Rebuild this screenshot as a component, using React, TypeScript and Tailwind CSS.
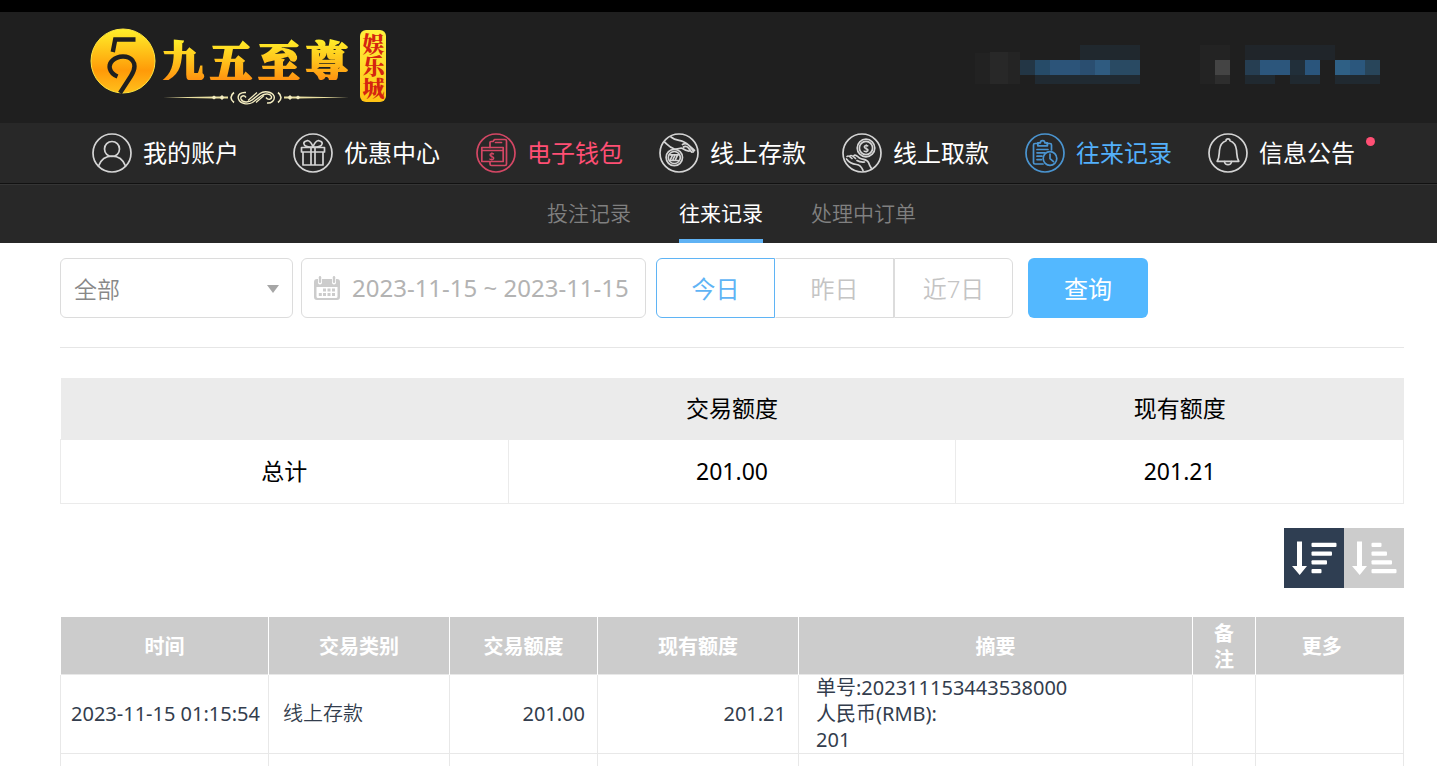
import React, { useState } from 'react';
import clsx from 'clsx';

type NavItem = {
  label: string;
  icon: React.ReactNode;
  color?: string;
  hasDot?: boolean;
};

type RecordRow = {
  time: string;
  type: string;
  amount: string;
  balance: string;
  summary: string[];
};

const IconFrame: React.FC<{ children: React.ReactNode }> = ({ children }) => (
  <svg
    className="size-10 shrink-0 opacity-80"
    viewBox="0 0 40 40"
    fill="none"
    stroke="currentColor"
    strokeWidth="1.7"
    strokeLinecap="round"
    strokeLinejoin="round"
    aria-hidden="true"
  >
    <circle cx="20" cy="20" r="19" />
    {children}
  </svg>
);

const UserIcon = () => (
  <IconFrame>
    <circle cx="20" cy="16" r="7.5" />
    <path d="M6.5 33 C9 26.5 13.5 23.2 20 23.2 S31 26.5 33.5 33" />
  </IconFrame>
);

const GiftIcon = () => (
  <IconFrame>
    <path d="M8.5 14.5h23v4.5h-23z M10 19v13h20V19 M18 14.5V32 M22 14.5V32" />
    <path d="M18.5 14 C15 14.5 11 13 10.8 10.5 C10.6 8 13.5 8.2 14.5 7.5 C17 8 19 11 20 14 C21 11 23 8 25.5 7.5 C26.5 8.2 29.4 8 29.2 10.5 C29 13 25 14.5 21.5 14" />
  </IconFrame>
);

const WalletIcon = () => (
  <IconFrame>
    <path d="M14 14.5V9.5q0-1 1-1h2l1.5-2h10.5q1.5 0 1.5 1.5v23q0 1.5-1.5 1.5H15.5q-1.5 0-1.5-1.5V29" />
    <path d="M19.5 9.5h6 M5.8 14.5h21.4v14H5.8z M5.8 17.5h21.4" />
    <text x="15.8" y="26.8" textAnchor="middle" fontSize="10" fontWeight="700" stroke="none" fill="currentColor">
      $
    </text>
  </IconFrame>
);

const DepositIcon = () => (
  <IconFrame>
    <circle cx="15.3" cy="24.5" r="8.2" />
    <circle cx="15.3" cy="24.5" r="6" />
    <path d="M11.5 26.5l1.8-3.8 M14 26.5l1.8-3.8 M16.5 26.5l1.8-3.8 M11 21.8h8.5 M11 27.5h8.5" />
    <path d="M5.5 9 C8 11 10.5 14.5 15 15.8 C19 16.8 21.5 14.2 23.5 15.5 C26.5 17.5 28 18.5 30.5 18 M12 4 C16 7.5 20 7 24 8.5 C29 10.5 31.5 14 35.5 17.5 M23.5 11.5 C27 9.5 30 12 32 15 C33.5 17 35 18.5 34 19 M24.5 14 C27 12 29.5 14.5 31.5 17.5 M29 14.5l3.5 4.5" />
  </IconFrame>
);

const WithdrawIcon = () => (
  <IconFrame>
    <circle cx="24" cy="15" r="8.8" />
    <circle cx="24" cy="15" r="6.6" />
    <text x="24" y="18.6" textAnchor="middle" fontSize="10" fontWeight="700" stroke="none" fill="currentColor">
      $
    </text>
    <path d="M5 23.5 C6.5 22 8 23.5 10 25.5 M8.3 22.8 C10 21.5 11.5 23.5 13.5 25.5 M12 22.5 C13.5 21 15 23 17.5 25 C21 27 25 26 26.5 29.5 C27.5 32.5 28.5 34 29.5 35.5 M4.5 26 C7 29.5 10 31 14.5 31.5 C19 32 20 35 21 37.5 M15 27.5 C18 29.5 20.5 29 22.5 29" />
  </IconFrame>
);

const RecordsIcon = () => (
  <IconFrame>
    <path d="M13.5 10.5h-3.5q-1.5 0-1.5 1.5v17.5q0 1.5 1.5 1.5H18 M21.5 10.5H25q1.5 0 1.5 1.5v5" />
    <path d="M12.8 12.8v-3h2.6a2.2 2.2 0 0 1 4.4 0h2.6v3z" />
    <path d="M12 16.5h11 M12 19.8h8 M12 23.2h5 M12 26.6h4.5" />
    <circle cx="25" cy="25.5" r="6.8" />
    <path d="M25 21v4.7l3.5 3" />
  </IconFrame>
);

const BellIcon = () => (
  <IconFrame>
    <path d="M18 7.8 a2 2 0 0 1 4 0 C26.5 9.5 28 12.5 28.5 17 C29 21.5 28.5 24.5 30.8 28.3 H9.2 C11.5 24.5 11 21.5 11.5 17 C12 12.5 13.5 9.5 18 7.8z" />
    <path d="M16.5 28.5 a3.5 3.2 0 0 0 7 0" />
  </IconFrame>
);

const CalendarIcon = () => (
  <svg className="h-6 w-[26px] shrink-0 fill-[#ccc]" viewBox="0 0 26 24" aria-hidden="true">
    <path d="M3 3h1v3.5a2 2 0 0 0 4 0V3h10v3.5a2 2 0 0 0 4 0V3h1q3 0 3 3v5H0V6q0-3 3-3z" />
    <rect x="4.8" y="0" width="2.4" height="7" rx="1.2" />
    <rect x="18.8" y="0" width="2.4" height="7" rx="1.2" />
    <path fillRule="evenodd" d="M0 11h26v10q0 3-3 3H3q-3 0-3-3z M2.5 11v9.5q0 1.5 1.5 1.5h18q1.5 0 1.5-1.5V11z" />
    <path d="M9 12.5h3v3H9z M13.5 12.5h3v3h-3z M18 12.5h3v3h-3z M4.8 17h3v3h-3z M9 17h3v3H9z M13.5 17h3v3h-3z M18 17h3v3h-3z" />
  </svg>
);

const SortIcon: React.FC<{ bars: number[] }> = ({ bars }) => (
  <svg className="size-full fill-white" viewBox="0 0 60 60" aria-hidden="true">
    <path d="M13 13.5h5V38h5L15.7 47 8 38h5z" />
    {bars.map((width, i) => (
      <rect key={i} x="27.5" y={14.7 + i * 8.8} width={width} height="4.2" rx="1" />
    ))}
  </svg>
);

const Logo = () => (
  <a href="#" className="flex items-start" aria-label="九五至尊娱乐城">
    <svg className="size-[66px]" viewBox="0 0 66 66" aria-hidden="true">
      <defs>
        <linearGradient id="coin" x1="0" y1="0" x2="0" y2="1">
          <stop offset="0" stopColor="#fff02a" />
          <stop offset="0.65" stopColor="#ff9a08" />
          <stop offset="1" stopColor="#ffc01c" />
        </linearGradient>
      </defs>
      <circle cx="33" cy="33" r="32" fill="url(#coin)" stroke="#ffe640" strokeWidth="1" />
      <g fill="none" stroke="#1f1f1f" strokeWidth="4.4">
        <path d="M45.5 11.5H25.2L22.8 24" />
        <path d="M27.5 48.5 C19 45 17.5 37 22.5 32.5 C28 27.5 38 27 42.5 32.5 C46 37 44.5 42.5 41 48 L30 65" />
      </g>
    </svg>
    <div className="ml-1.5 mt-2.5">
      <div className="flex gap-1.5 bg-linear-to-b from-[#fff22a] via-[#ffc61c] to-[#ff9210] bg-clip-text font-['Noto_Serif_CJK_SC','Noto_Sans_CJK_SC',serif] text-[42px] leading-[42px] font-black text-transparent [-webkit-text-stroke:2px_transparent]">
        {['九', '五', '至', '尊'].map((char) => (
          <span key={char}>{char}</span>
        ))}
      </div>
      <svg className="mt-2.5 h-4 w-[188px]" viewBox="0 0 186 16" fill="none" stroke="#f3ecc0" aria-hidden="true">
        <path d="M0 7.5 L50 6.6 H65 V8.4 H50z M186 7.5 L136 6.6 H121 V8.4 H136z" fill="#e9dfa0" stroke="none" />
        <path d="M51 5.5l2.5 2-2.5 2-2.5-2z M59 5l2.5 2.5-2.5 2.5-2.5-2.5z M135 5.5l2.5 2-2.5 2-2.5-2z M127 5l2.5 2.5-2.5 2.5-2.5-2.5z" fill="#f3ecc0" stroke="none" />
        <path d="M71 2.5 C67 5.5 67 9.5 71 12.5 M115 2.5 C119 5.5 119 9.5 115 12.5" strokeWidth="1.6" />
        <path d="M83 7.5 C81 4.5 77 6 78 9 C79.5 13 86 12.5 89 10 L97 3.5 C101 .5 109 1.5 111 6 C112.5 10.5 108 13.5 104 13 M103 7.5 C105 10.5 109 9.5 108.5 6.5 C107 3.5 102 3 98 6 L89.5 12.5 C85 15 77 14 75.5 9 C74 4.5 78 2 83 2.5" strokeWidth="1.4" />
        <path d="M85 10.5 L94 2.5 M93 12.5 L101 5.5" strokeWidth="1.2" />
      </svg>
    </div>
    <div className="ml-2.5 mt-0.5 flex h-18 w-[26px] items-center justify-center rounded-md bg-linear-to-b from-[#fff23c] to-[#ffc314]">
      <span className="font-['Noto_Serif_CJK_SC','Noto_Sans_CJK_SC',serif] text-[22px] leading-[26px] font-black text-[#d42410] [writing-mode:vertical-rl]">
        娱乐城
      </span>
    </div>
  </a>
);

// x, y, width, height, fill
const maskBlocks: [number, number, number, number, string][] = [
  [0, 8, 15, 31, '#222222'],
  [15, 7, 18, 32, '#282828'],
  [33, 7, 12, 32, '#242424'],
  [105, 0, 60, 15, '#20282e'],
  [60, 30, 105, 9, '#202a32'],
  [45, 15, 15, 15, '#233645'],
  [60, 15, 15, 15, '#264b68'],
  [75, 15, 30, 15, '#2c5479'],
  [105, 15, 15, 15, '#2a4e70'],
  [120, 15, 15, 15, '#2f5b80'],
  [135, 15, 30, 15, '#294a63'],
  [225, 0, 30, 39, '#232323'],
  [240, 15, 15, 15, '#444444'],
  [240, 30, 15, 9, '#2d2d2d'],
  [270, 0, 90, 15, '#20252a'],
  [270, 30, 30, 9, '#202930'],
  [315, 30, 30, 9, '#202930'],
  [360, 30, 45, 9, '#202930'],
  [270, 15, 15, 15, '#263e52'],
  [285, 15, 30, 15, '#2c567c'],
  [315, 15, 15, 15, '#212f3a'],
  [330, 15, 15, 15, '#2a557c'],
  [360, 15, 15, 15, '#2f6085'],
  [375, 15, 15, 15, '#2b577d'],
  [390, 15, 15, 15, '#28455a'],
];

const AccountMask = () => (
  <svg className="h-[39px] w-[405px]" viewBox="0 0 405 39" shapeRendering="crispEdges" aria-hidden="true">
    {maskBlocks.map(([x, y, width, height, fill]) => (
      <rect key={`${x}-${y}`} x={x} y={y} width={width} height={height} fill={fill} />
    ))}
  </svg>
);

const navItems: NavItem[] = [
  { label: '我的账户', icon: <UserIcon /> },
  { label: '优惠中心', icon: <GiftIcon /> },
  { label: '电子钱包', icon: <WalletIcon />, color: 'text-[#ff4f74]' },
  { label: '线上存款', icon: <DepositIcon /> },
  { label: '线上取款', icon: <WithdrawIcon /> },
  { label: '往来记录', icon: <RecordsIcon />, color: 'text-[#53b0fb]' },
  { label: '信息公告', icon: <BellIcon />, hasDot: true },
];

const tabs = ['投注记录', '往来记录', '处理中订单'];
const ranges = ['今日', '昨日', '近7日'];

const records: RecordRow[] = [
  {
    time: '2023-11-15 01:15:54',
    type: '线上存款',
    amount: '201.00',
    balance: '201.21',
    summary: ['单号:202311153443538000', '人民币(RMB):', '201'],
  },
];

const App: React.FC = () => {
  const [tab, setTab] = useState('往来记录');
  const [range, setRange] = useState('今日');
  const [descending, setDescending] = useState(true);

  return (
    <div className="h-screen overflow-hidden bg-white font-['Noto_Sans','Noto_Sans_CJK_SC',sans-serif]">
      <header className="border-t-12 border-black bg-[#1f1f1f]">
        <div className="flex h-[111px] items-start justify-between pt-4 pr-[57px] pl-[90px]">
          <Logo />
          <div className="pt-[17px]">
            <AccountMask />
          </div>
        </div>
      </header>

      <nav className="flex h-[61px] items-center gap-9 border-b border-[#111] bg-[#282828] pl-[92px] text-2xl text-white">
        {navItems.map((item) => (
          <a
            key={item.label}
            href="#"
            className={clsx('relative flex items-center gap-[11px] whitespace-nowrap first:mr-[18px]', item.color)}
          >
            {item.icon}
            {item.label}
            {item.hasDot && <span className="absolute top-1 -right-5 size-[9px] rounded-full bg-[#ff4f74]" />}
          </a>
        ))}
      </nav>

      <div className="flex h-[59px] justify-center gap-12 border-t border-[#353535] bg-[#282828] pl-[26px] text-[21px]">
        {tabs.map((name) => (
          <button
            key={name}
            type="button"
            onClick={() => setTab(name)}
            className={clsx(
              'border-b-4 pt-1',
              tab === name ? 'border-[#5fb2f4] text-white' : 'border-transparent font-[350] text-[#808080]'
            )}
          >
            {name}
          </button>
        ))}
      </div>

      <main className="pt-[15px] pr-[33px] pl-[60px]">
        <form className="flex h-15 text-2xl" onSubmit={(e) => e.preventDefault()}>
          <div className="relative mr-2 w-[233px]">
            <select
              aria-label="交易类别"
              className="size-full appearance-none rounded-md border border-[#dcdcdc] bg-white px-[13px] pt-0.5 text-[23px] font-[350] text-[#888]"
            >
              <option>全部</option>
            </select>
            <svg className="pointer-events-none absolute top-[27px] right-3.5 h-2 w-3 fill-[#a6a6a6]" viewBox="0 0 12 8">
              <path d="M0 0h12L6 8z" />
            </svg>
          </div>
          <label className="mr-2.5 flex w-[345px] items-center rounded-md border border-[#dcdcdc] pl-3">
            <CalendarIcon />
            <input
              type="text"
              aria-label="日期"
              defaultValue="2023-11-15 ~ 2023-11-15"
              className="ml-3 min-w-0 flex-1 text-[#b3b3b3] outline-none"
            />
          </label>
          <div className="mr-[15px] flex w-[357px]">
            {ranges.map((name) => (
              <button
                key={name}
                type="button"
                onClick={() => setRange(name)}
                className={clsx(
                  'flex-1 border pt-0.5 first:rounded-l-md last:rounded-r-md',
                  range === name
                    ? 'border-[#5fb4f5] text-[#5fb4f5]'
                    : 'border-[#dcdcdc] border-l-transparent font-[350] text-[#c4c4c4] last:border-l-[#dcdcdc]'
                )}
              >
                {name}
              </button>
            ))}
          </div>
          <button type="submit" className="w-30 rounded-md bg-[#53b8ff] pt-0.5 text-white">
            查询
          </button>
        </form>

        <hr className="mt-[29px] border-[#e6e6e6]" />

        <table className="mt-[30px] w-full table-fixed border-collapse text-center text-[23px] text-black">
          <thead>
            <tr className="h-[61px] bg-[#ebebeb]">
              <th />
              <th className="font-normal">交易额度</th>
              <th className="font-normal">现有额度</th>
            </tr>
          </thead>
          <tbody>
            <tr className="h-16">
              <td className="border border-[#ebebeb]">总计</td>
              <td className="border border-[#ebebeb]">201.00</td>
              <td className="border border-[#ebebeb]">201.21</td>
            </tr>
          </tbody>
        </table>

        <div className="mt-6 flex justify-end">
          <button
            type="button"
            aria-label="降序"
            onClick={() => setDescending(true)}
            className={clsx('size-15', descending ? 'bg-[#2f3e52]' : 'bg-[#ccc]')}
          >
            <SortIcon bars={[25, 20.5, 15.5, 10]} />
          </button>
          <button
            type="button"
            aria-label="升序"
            onClick={() => setDescending(false)}
            className={clsx('size-15', descending ? 'bg-[#ccc]' : 'bg-[#2f3e52]')}
          >
            <SortIcon bars={[10, 15.5, 20.5, 25]} />
          </button>
        </div>

        <table className="mt-[29px] w-full table-fixed border-collapse text-[20px] leading-[26px] text-[#333d4d]">
          <colgroup>
            <col className="w-[208px]" />
            <col className="w-[181px]" />
            <col className="w-[148px]" />
            <col className="w-[201px]" />
            <col />
            <col className="w-[63px]" />
            <col className="w-[148px]" />
          </colgroup>
          <thead>
            <tr className="h-[58px] bg-[#ccc] text-white *:border-l *:border-white *:pt-1">
              <th>时间</th>
              <th>交易类别</th>
              <th>交易额度</th>
              <th>现有额度</th>
              <th>摘要</th>
              <th className="px-5">备注</th>
              <th className="pr-4">更多</th>
            </tr>
          </thead>
          <tbody>
            {records.map((row) => (
              <tr key={row.time} className="h-[79px] *:border *:border-[#e8e8e8]">
                <td className="pl-2.5 whitespace-nowrap">{row.time}</td>
                <td className="pl-3.5 font-[350]">{row.type}</td>
                <td className="pr-3 text-right">{row.amount}</td>
                <td className="pr-3 text-right">{row.balance}</td>
                <td className="pl-[17px]">
                  {row.summary.map((line) => (
                    <p key={line}>{line}</p>
                  ))}
                </td>
                <td />
                <td />
              </tr>
            ))}
            <tr className="h-[79px] *:border *:border-[#e8e8e8]">
              <td />
              <td />
              <td />
              <td />
              <td />
              <td />
              <td />
            </tr>
          </tbody>
        </table>
      </main>
    </div>
  );
};

export default App;
